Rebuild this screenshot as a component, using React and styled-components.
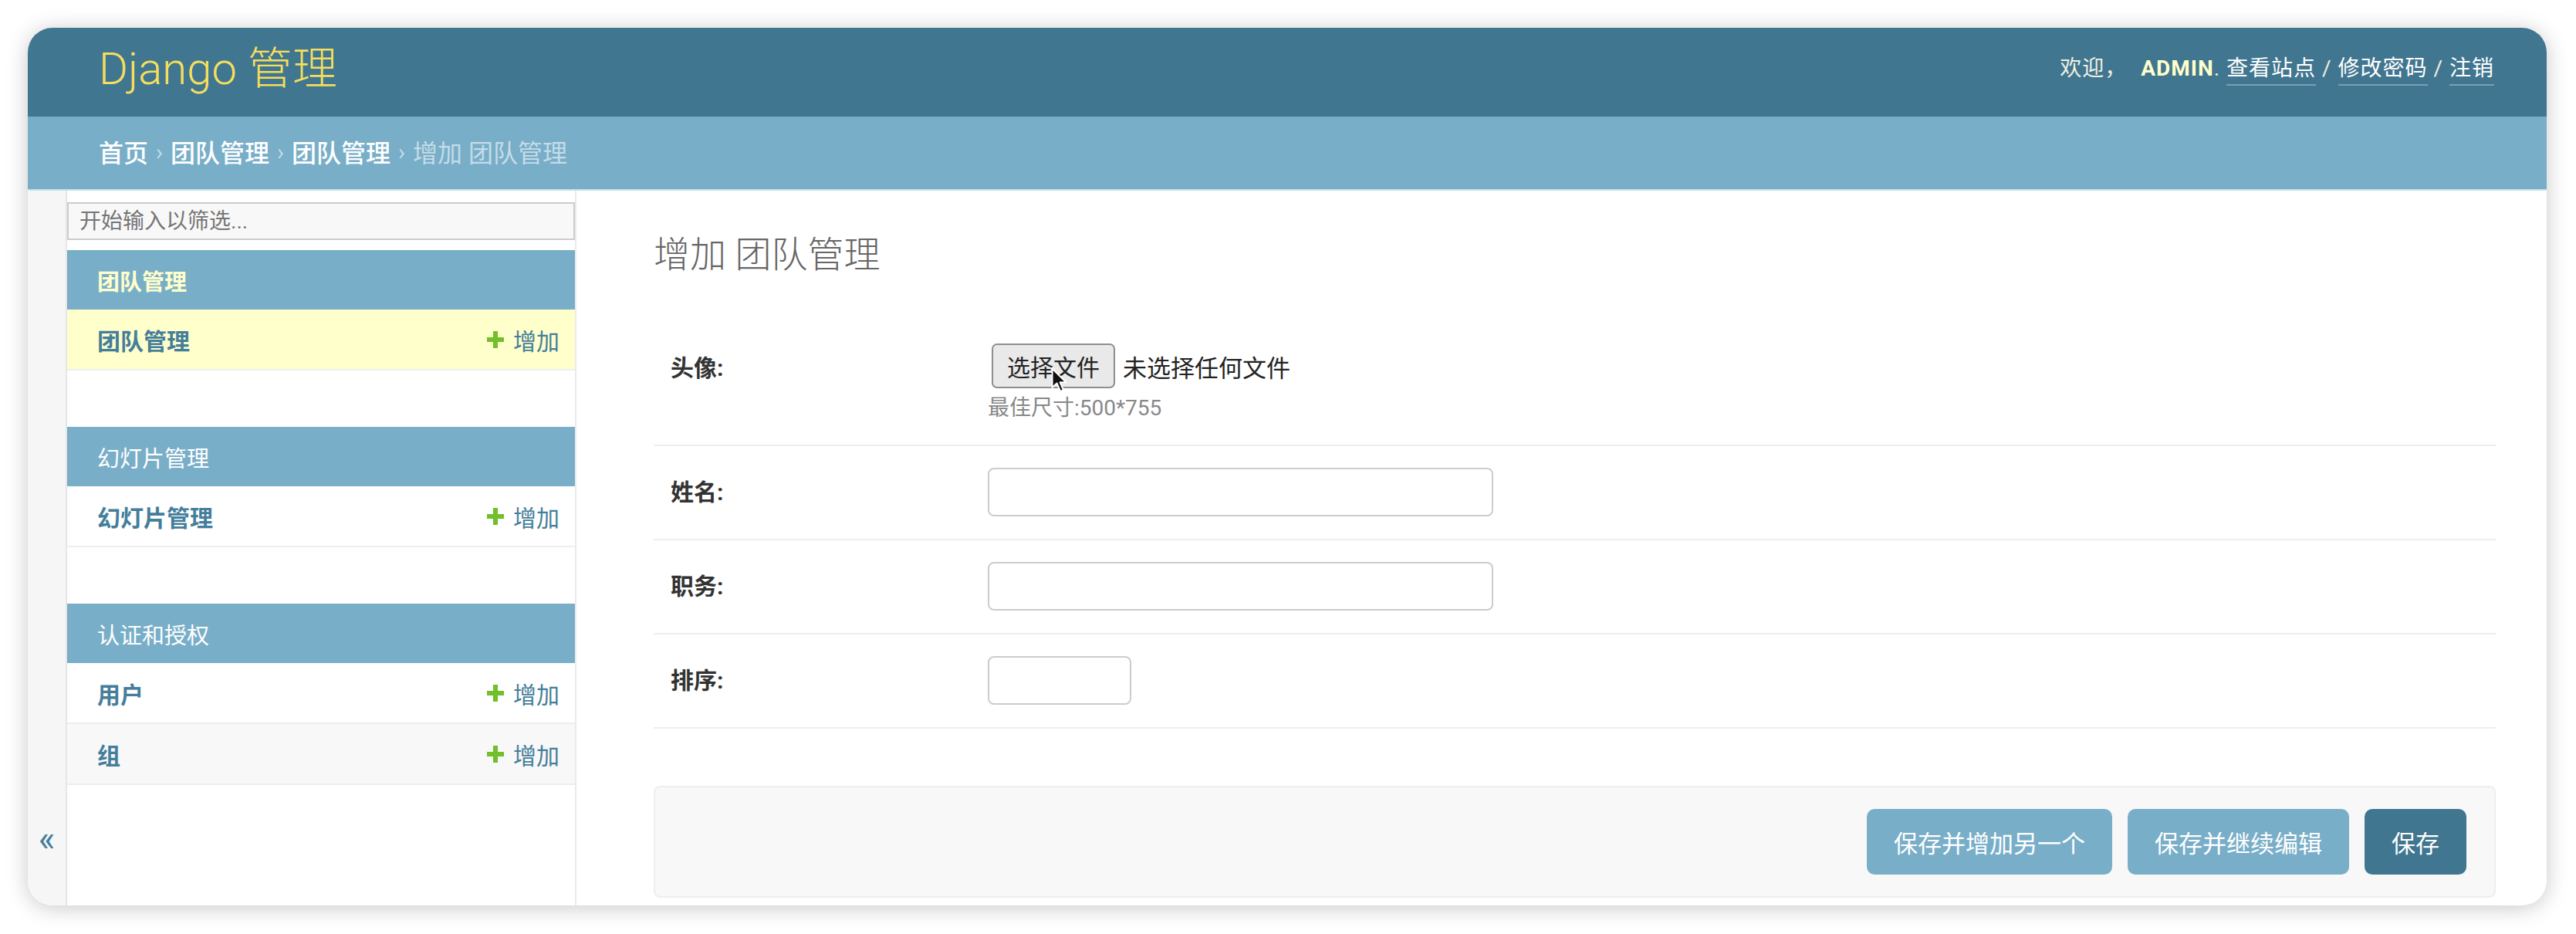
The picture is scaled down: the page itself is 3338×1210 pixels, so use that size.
import React from "react";
import styled, { createGlobalStyle } from "styled-components";

const GlobalStyle = createGlobalStyle`
  html, body {
    margin: 0;
    padding: 0;
    background: #fff;
  }
  body {
    font-family: Roboto, "Noto Sans CJK SC", sans-serif;
  }
  * {
    box-sizing: border-box;
  }
`;

const Stage = styled.div`
  width: 3338px;
  height: 1210px;
  padding: 36px 38px 37px 36px;
  overflow: hidden;
`;

const Window = styled.div`
  width: 3264px;
  height: 1137px;
  border-radius: 32px;
  overflow: hidden;
  background: #fff;
  box-shadow: 0 3px 28px rgba(0, 0, 0, 0.22);
  display: flex;
  flex-direction: column;
`;

const Header = styled.header`
  flex: 0 0 115px;
  background: #417690;
  display: flex;
  align-items: center;
  justify-content: space-between;
  padding: 0 68px 10px 92px;
`;

const Branding = styled.h1`
  margin: 0;
  font-size: 58px;
  font-weight: 300;
  line-height: 1;
  color: #f5dd5d;
`;

const UserTools = styled.div`
  font-size: 28px;
  letter-spacing: 1px;
  color: #eef0e0;
  display: flex;
  align-items: baseline;
  white-space: pre;
`;

const UserName = styled.strong`
  color: #ffc;
  font-weight: 700;
  margin-left: 18px;
`;

const ToolLink = styled.a`
  color: #fff;
  text-decoration: none;
  border-bottom: 2px solid rgba(255, 255, 255, 0.3);
  padding-bottom: 3px;
`;

const Breadcrumbs = styled.nav`
  flex: 0 0 96px;
  background: #79aec8;
  border-bottom: 2px solid #c6dfeb;
  display: flex;
  align-items: center;
  padding: 0 0 4px 92px;
  font-size: 32px;
  color: #c4dce8;
`;

const Crumb = styled.a`
  color: #fff;
  text-decoration: none;
  font-weight: 500;
`;

const Sep = styled.span`
  margin: 0 10px;
  font-size: 30px;
`;

const Main = styled.div`
  flex: 1;
  display: flex;
  min-height: 0;
`;

const Toggle = styled.div`
  flex: 0 0 51px;
  background: #f6f6f6;
  border-right: 2px solid #e6e6e6;
  display: flex;
  justify-content: center;
  align-items: flex-end;
  padding-bottom: 64px;
  color: #447e9b;
  font-size: 46px;
  line-height: 1;
`;

const Sidebar = styled.nav`
  flex: 0 0 660px;
  border-right: 2px solid #eaeaea;
  padding-top: 15px;
`;

const Filter = styled.input`
  display: block;
  width: 100%;
  height: 49px;
  margin: 0 0 13px;
  border: 2px solid #ccc;
  background: #f8f8f8;
  padding: 0 14px;
  font-size: 28px;
  font-family: inherit;
  color: #333;

  &::placeholder {
    color: #757575;
  }
`;

const Module = styled.section`
  margin-bottom: 73px;
`;

const Caption = styled.div`
  height: 77px;
  background: #79aec8;
  color: ${({ $current }) => ($current ? "#ffc" : "#fff")};
  font-weight: ${({ $current }) => ($current ? 700 : 400)};
  font-size: 29px;
  display: flex;
  align-items: center;
  padding-left: 39px;
`;

const ModelRow = styled.div`
  height: 79px;
  display: flex;
  align-items: center;
  justify-content: space-between;
  padding: 0 20px 0 39px;
  border-bottom: 2px solid #eee;
  background: ${({ $current, $alt }) =>
    $current ? "#ffc" : $alt ? "#f8f8f8" : "#fff"};
`;

const ModelName = styled.a`
  color: #447e9b;
  font-size: 30px;
  font-weight: 700;
  text-decoration: none;
`;

const AddLink = styled.a`
  color: #447e9b;
  font-size: 30px;
  display: flex;
  align-items: center;
  gap: 12px;
  text-decoration: none;
`;

const Content = styled.main`
  flex: 1;
  min-width: 0;
  padding: 55px 66px 0 100px;
`;

const Title = styled.h1`
  margin: 0 0 60px;
  font-size: 47px;
  font-weight: 300;
  line-height: 55px;
  color: #666;
`;

const FormRow = styled.div`
  display: flex;
  padding: 28px 23px 29px 22px;
  border-bottom: 2px solid #eee;
`;

const Label = styled.label`
  flex: 0 0 411px;
  padding-top: 3px;
  font-size: 30px;
  line-height: 58px;
  font-weight: 700;
  color: #333;
`;

const TextInput = styled.input`
  width: ${({ $w }) => $w}px;
  height: 63px;
  border: 2px solid #ccc;
  border-radius: 8px;
  background: #fff;
  padding: 0 12px;
  font-size: 30px;
`;

const FileWidget = styled.div`
  position: relative;
  display: flex;
  flex-direction: column;
`;

const FileLine = styled.div`
  display: flex;
  align-items: center;
`;

const FileButton = styled.button`
  height: 58px;
  margin-left: 5px;
  padding: 0 18px;
  background: #e9e9e9;
  border: 2px solid #8e8e8e;
  border-radius: 7px;
  font-size: 30px;
  font-family: inherit;
  color: #222;
`;

const FileStatus = styled.span`
  margin-left: 10px;
  font-size: 31px;
  color: #222;
`;

const Help = styled.div`
  margin-top: 8px;
  font-size: 28px;
  line-height: 36px;
  color: #888;
`;

const Cursor = styled.svg`
  position: absolute;
  left: 82px;
  top: 31px;
`;

const SubmitRow = styled.div`
  margin-top: 74px;
  height: 145px;
  display: flex;
  justify-content: flex-end;
  align-items: center;
  gap: 20px;
  padding: 0 36px;
  background: #f8f8f8;
  border: 2px solid #eee;
  border-radius: 8px;
`;

const SaveButton = styled.button`
  height: 85px;
  padding: 0 35px;
  border: none;
  border-radius: 10px;
  background: ${({ $default }) => ($default ? "#417690" : "#79aec8")};
  color: #fff;
  font-size: 31px;
  font-family: inherit;
`;

function PlusIcon() {
  return (
    <svg width="22" height="22" viewBox="0 0 22 22">
      <rect x="8" y="0" width="6" height="22" fill="#70bf2b" />
      <rect x="0" y="8" width="22" height="6" fill="#70bf2b" />
    </svg>
  );
}

const modules = [
  { name: "团队管理", current: true, models: ["团队管理"] },
  { name: "幻灯片管理", models: ["幻灯片管理"] },
  { name: "认证和授权", models: ["用户", "组"] },
];

export default function App() {
  return (
    <>
      <GlobalStyle />
      <Stage>
        <Window>
          <Header>
            <Branding>Django 管理</Branding>
            <UserTools>
              欢迎，<UserName>ADMIN</UserName>. <ToolLink>查看站点</ToolLink> /{" "}
              <ToolLink>修改密码</ToolLink> / <ToolLink>注销</ToolLink>
            </UserTools>
          </Header>
          <Breadcrumbs>
            <Crumb>首页</Crumb>
            <Sep>›</Sep>
            <Crumb>团队管理</Crumb>
            <Sep>›</Sep>
            <Crumb>团队管理</Crumb>
            <Sep>›</Sep>
            增加 团队管理
          </Breadcrumbs>
          <Main>
            <Toggle>«</Toggle>
            <Sidebar>
              <Filter placeholder="开始输入以筛选..." />
              {modules.map((m) => (
                <Module key={m.name}>
                  <Caption $current={m.current}>{m.name}</Caption>
                  {m.models.map((model, i) => (
                    <ModelRow key={model} $current={m.current} $alt={i % 2 === 1}>
                      <ModelName>{model}</ModelName>
                      <AddLink>
                        <PlusIcon />
                        增加
                      </AddLink>
                    </ModelRow>
                  ))}
                </Module>
              ))}
            </Sidebar>
            <Content>
              <Title>增加 团队管理</Title>
              <FormRow>
                <Label>头像:</Label>
                <FileWidget>
                  <FileLine>
                    <FileButton>选择文件</FileButton>
                    <FileStatus>未选择任何文件</FileStatus>
                  </FileLine>
                  <Help>最佳尺寸:500*755</Help>
                  <Cursor width="22" height="34" viewBox="0 0 22 34">
                    <path
                      d="M1.5 1.5 L1.5 26 L7.5 20.5 L12 31 L16 29.3 L11.6 19.3 L19.5 19.3 Z"
                      fill="#111"
                      stroke="#fff"
                      strokeWidth="2"
                      strokeLinejoin="round"
                    />
                  </Cursor>
                </FileWidget>
              </FormRow>
              <FormRow>
                <Label>姓名:</Label>
                <TextInput $w={655} />
              </FormRow>
              <FormRow>
                <Label>职务:</Label>
                <TextInput $w={655} />
              </FormRow>
              <FormRow>
                <Label>排序:</Label>
                <TextInput $w={186} />
              </FormRow>
              <SubmitRow>
                <SaveButton>保存并增加另一个</SaveButton>
                <SaveButton>保存并继续编辑</SaveButton>
                <SaveButton $default>保存</SaveButton>
              </SubmitRow>
            </Content>
          </Main>
        </Window>
      </Stage>
    </>
  );
}
